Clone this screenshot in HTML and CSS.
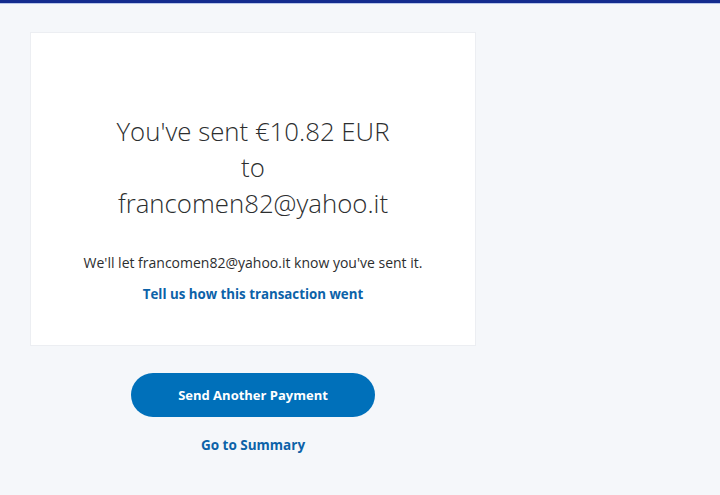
FILE: index.html
```html
<!DOCTYPE html>
<html>
<head>
<meta charset="utf-8">
<link rel="stylesheet" href="styles.css">
</head>
<body>
<div class="topbar"></div>
<main class="page">
  <div class="column">
    <section class="card">
      <h1 class="headline">You've sent €10.82 EUR<br>to<br>francomen82@yahoo.it</h1>
      <p class="note">We'll let francomen82@yahoo.it know you've sent it.</p>
      <a class="feedback" href="#">Tell us how this transaction went</a>
    </section>
    <div class="actions">
      <button class="primary">Send Another Payment</button>
      <a class="summary" href="#">Go to Summary</a>
    </div>
  </div>
</main>
</body>
</html>
```
FILE: styles.css
```css
html, body {
  margin: 0;
  padding: 0;
  background: #f5f7fa;
  font-family: "Open Sans", "Noto Sans", sans-serif;
  color: #2c2e2f;
}
.topbar {
  height: 3px;
  background: #142c8e;
  border-bottom: 1px solid #b8c6ea;
}
.page {
  padding: 28px 0 0 30px;
}
.column {
  width: 446px;
  display: flex;
  flex-direction: column;
  align-items: center;
}
.card {
  box-sizing: border-box;
  width: 446px;
  height: 314px;
  background: #fff;
  border: 1px solid #eceef2;
  display: flex;
  flex-direction: column;
  align-items: center;
  padding-top: 80px;
}
.headline {
  margin: 0;
  font-size: 25.8px;
  font-weight: 300;
  line-height: 36px;
  text-align: center;
  color: #2c2e2f;
}
.note {
  margin: 32px 0 0;
  font-size: 14px;
  line-height: 20px;
}
.feedback {
  margin-top: 12px;
  font-size: 13.3px;
  font-weight: 700;
  color: #0c62a8;
  text-decoration: none;
}
.actions {
  display: flex;
  flex-direction: column;
  align-items: center;
  margin-top: 27px;
}
.primary {
  width: 244px;
  height: 44px;
  border: none;
  border-radius: 22px;
  background: #0070ba;
  color: #fff;
  font-family: inherit;
  font-size: 13px;
  font-weight: 700;
}
.summary {
  margin-top: 19px;
  font-size: 13.5px;
  font-weight: 700;
  color: #0c62a8;
  text-decoration: none;
}
```
